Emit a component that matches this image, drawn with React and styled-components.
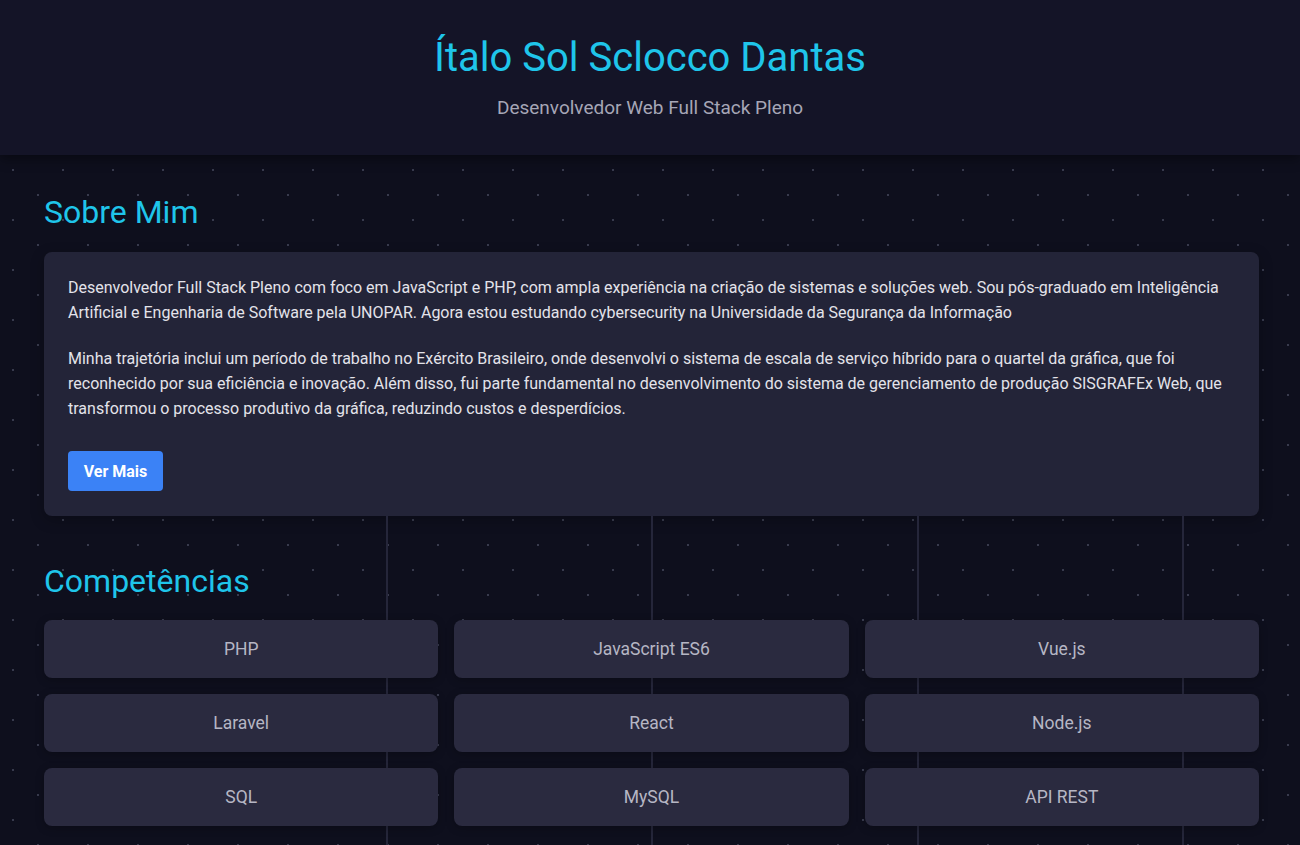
import React from "react";
import styled, { createGlobalStyle } from "styled-components";

const GlobalStyle = createGlobalStyle`
  * { box-sizing: border-box; }
  html, body { margin: 0; padding: 0; }
  body {
    font-family: Roboto, "Liberation Sans", Arial, sans-serif;
    background-color: #0e0f1d;
    background-image:
      radial-gradient(circle at 13px 20px, rgba(120, 124, 150, 0.4) 0.9px, transparent 1.4px),
      radial-gradient(circle at 38px 45px, rgba(120, 124, 150, 0.4) 0.9px, transparent 1.4px);
    background-size: 50px 50px;
    color: #e2e2ea;
  }
`;

const Page = styled.div`
  min-height: 100vh;
  display: flex;
  flex-direction: column;
`;

const Header = styled.header`
  position: relative;
  z-index: 1;
  height: 155px;
  background: #141427;
  box-shadow: 0 3px 12px rgba(0, 0, 0, 0.45);
  display: flex;
  flex-direction: column;
  align-items: center;
  padding-top: 32px;
`;

const Title = styled.h1`
  margin: 0;
  font-size: 40px;
  font-weight: 400;
  line-height: 52px;
  color: #1fc5ea;
`;

const Subtitle = styled.p`
  margin: 12px 0 0;
  font-size: 19px;
  line-height: 24px;
  color: #a6a6b6;
`;

const Main = styled.main`
  flex: 1;
  display: flex;
  flex-direction: column;
`;

const Section = styled.section`
  padding: ${(p) => p.$pad} 41px 0 44px;
  flex: ${(p) => (p.$grow ? 1 : "none")};
  ${(p) =>
    p.$lines &&
    `
    background-image:
      linear-gradient(#25263a, #25263a),
      linear-gradient(#25263a, #25263a),
      linear-gradient(#25263a, #25263a),
      linear-gradient(#25263a, #25263a);
    background-size: 2px 100%;
    background-repeat: no-repeat;
    background-position: 386px 0, 651px 0, 917px 0, 1182px 0;
    padding-bottom: 18px;
  `}
`;

const SectionTitle = styled.h2`
  margin: 0 0 ${(p) => p.$gap || "20px"};
  font-size: 32px;
  font-weight: 400;
  line-height: 40px;
  color: #1fc5ea;
`;

const Card = styled.div`
  background: #232438;
  border-radius: 8px;
  padding: 23px 24px 25px 24px;
  box-shadow: 0 4px 14px rgba(0, 0, 0, 0.25);
`;

const Paragraph = styled.p`
  margin: 0 0 21px;
  font-size: 16px;
  line-height: 25px;
  color: #e3e3ea;
`;

const Button = styled.button`
  margin-top: 30px;
  display: block;
  width: 95px;
  height: 40px;
  border: none;
  border-radius: 4px;
  background: #3b82f6;
  color: #ffffff;
  font-family: Roboto, "Liberation Sans", Arial, sans-serif;
  font-weight: 700;
  font-size: 16px;
  cursor: pointer;
`;

const SkillGrid = styled.div`
  display: grid;
  grid-template-columns: repeat(3, 1fr);
  gap: 16px;
`;

const Skill = styled.div`
  height: 58px;
  display: flex;
  align-items: center;
  justify-content: center;
  background: #2a2a3f;
  border-radius: 8px;
  font-size: 17.5px;
  color: #b6b6c4;
  box-shadow: 0 2px 8px rgba(0, 0, 0, 0.25);
`;

const skills = [
  "PHP",
  "JavaScript ES6",
  "Vue.js",
  "Laravel",
  "React",
  "Node.js",
  "SQL",
  "MySQL",
  "API REST",
];

export default function App() {
  return (
    <Page>
      <GlobalStyle />
      <Header>
        <Title>Ítalo Sol Sclocco Dantas</Title>
        <Subtitle>Desenvolvedor Web Full Stack Pleno</Subtitle>
      </Header>
      <Main>
        <Section $pad="37px">
          <SectionTitle>Sobre Mim</SectionTitle>
          <Card>
            <Paragraph>
              Desenvolvedor Full Stack Pleno com foco em JavaScript e PHP, com ampla experiência na criação de
              sistemas e soluções web. Sou pós-graduado em Inteligência Artificial e Engenharia de Software pela
              UNOPAR. Agora estou estudando cybersecurity na Universidade da Segurança da Informação
            </Paragraph>
            <Paragraph>
              Minha trajetória inclui um período de trabalho no Exército Brasileiro, onde desenvolvi o sistema de
              escala de serviço híbrido para o quartel da gráfica, que foi reconhecido por sua eficiência e
              inovação. Além disso, fui parte fundamental no desenvolvimento do sistema de gerenciamento de
              produção SISGRAFEx Web, que transformou o processo produtivo da gráfica, reduzindo custos e
              desperdícios.
            </Paragraph>
            <Button>Ver Mais</Button>
          </Card>
        </Section>
        <Section $pad="45px" $lines $grow>
          <SectionTitle $gap="19px">Competências</SectionTitle>
          <SkillGrid>
            {skills.map((s) => (
              <Skill key={s}>{s}</Skill>
            ))}
          </SkillGrid>
        </Section>
      </Main>
    </Page>
  );
}
